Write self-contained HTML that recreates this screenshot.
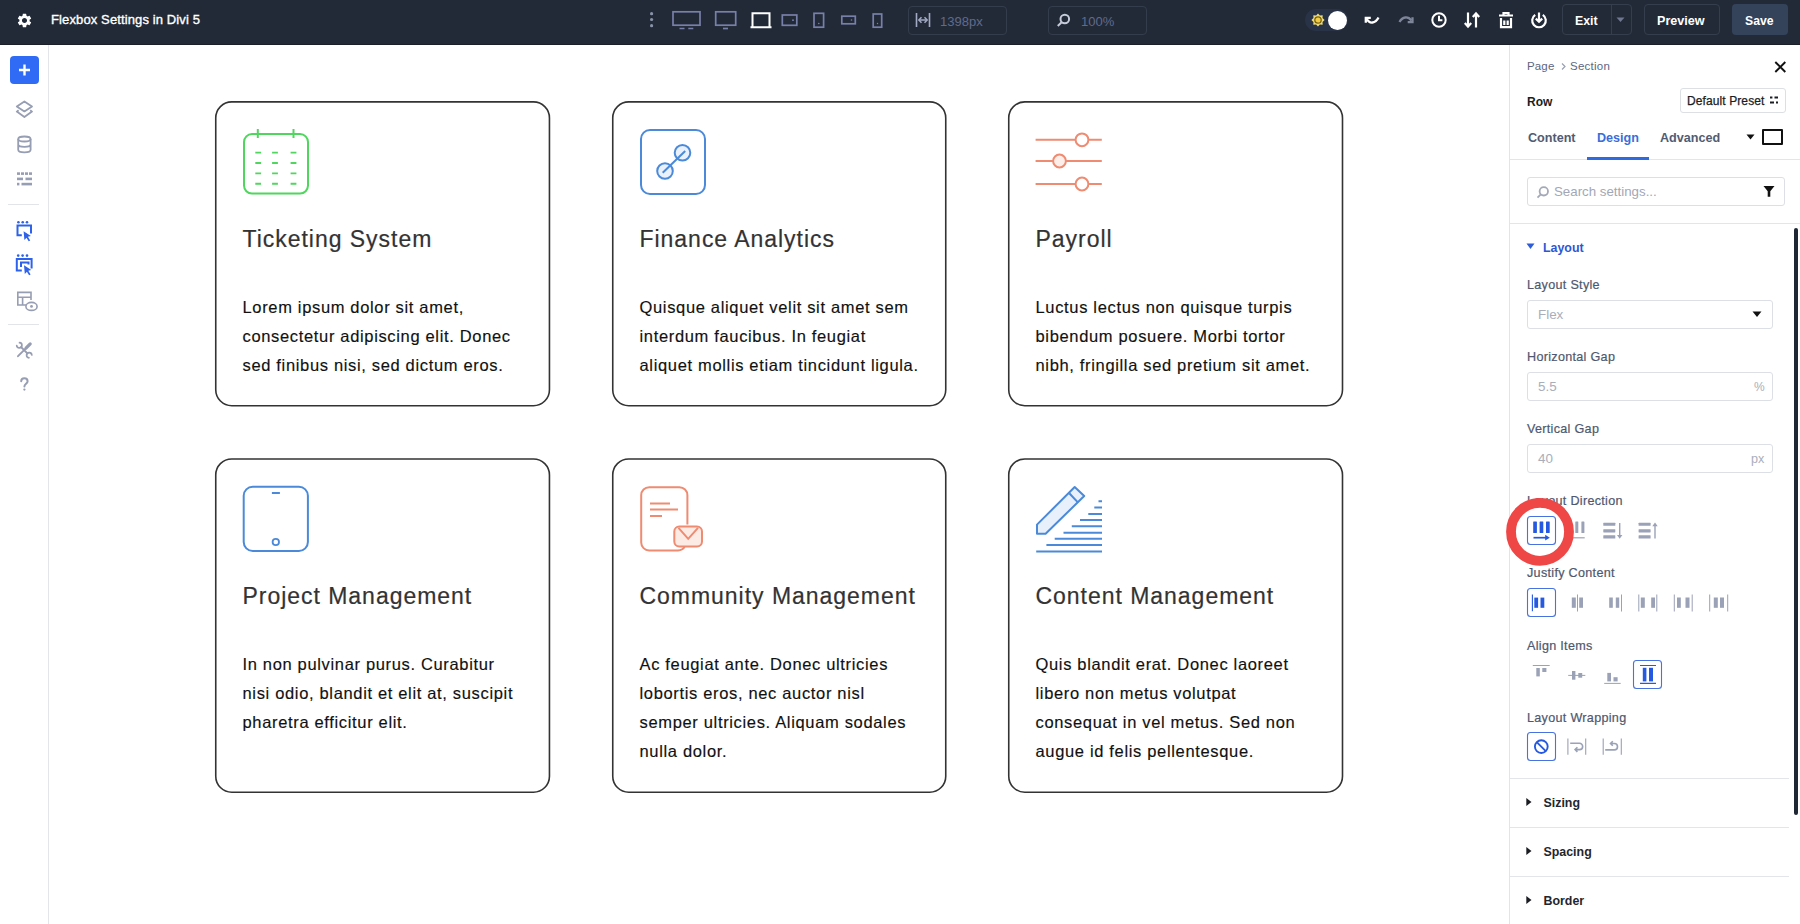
<!DOCTYPE html>
<html><head><meta charset="utf-8">
<style>
*{box-sizing:border-box;margin:0;padding:0}
html,body{width:1800px;height:924px;overflow:hidden;background:#fff;font-family:"Liberation Sans",sans-serif}
.a{position:absolute}
#top{left:0;top:0;width:1800px;height:45px;background:#222a38;border-bottom:1px solid #1b1f28}
#side{left:0;top:45px;width:49px;height:879px;background:#fff;border-right:1px solid #e3e5ea}
#panel{left:1509px;top:45px;width:291px;height:879px;background:#fff;border-left:1px solid #e2e4e9}
.card{position:absolute;width:335px;border:1.5px solid transparent;border-radius:15px}
.card .ic{position:absolute;left:26.5px;top:26.5px;width:68px;height:68px}
.card h3{position:absolute;left:26.5px;top:122px;font-weight:400;font-size:23px;line-height:30px;letter-spacing:0.97px;color:#333;white-space:nowrap;-webkit-text-stroke:0.2px #333}
.card p{position:absolute;left:26.5px;top:191px;font-size:16.5px;line-height:29px;letter-spacing:0.66px;color:#111;white-space:nowrap;-webkit-text-stroke:0.15px #111}
.t{position:absolute;white-space:nowrap;line-height:1}
.lbl{font-size:12.6px;color:#4f586e;letter-spacing:0.3px;-webkit-text-stroke:0.2px #4f586e}
.inp{left:1527px;width:246px;height:29px;border:1px solid #dcdfe5;border-radius:3px}
</style></head><body>
<div id="top" class="a">
  <svg class="a" style="left:16px;top:12px" width="17" height="17" viewBox="0 0 24 24"><path fill="#fff" d="M19.14 12.94c.04-.3.06-.61.06-.94 0-.32-.02-.64-.07-.94l2.03-1.58a.49.49 0 0 0 .12-.61l-1.92-3.32a.488.488 0 0 0-.59-.22l-2.39.96c-.5-.38-1.03-.7-1.62-.94l-.36-2.54a.484.484 0 0 0-.48-.41h-3.84c-.24 0-.43.17-.47.41l-.36 2.54c-.59.24-1.13.57-1.62.94l-2.39-.96c-.22-.08-.47 0-.59.22L2.74 8.87c-.12.21-.08.47.12.61l2.03 1.58c-.05.3-.09.63-.09.94s.02.64.07.94l-2.03 1.58a.49.49 0 0 0-.12.61l1.92 3.32c.12.22.37.29.59.22l2.39-.96c.5.38 1.03.7 1.62.94l.36 2.54c.05.24.24.41.48.41h3.84c.24 0 .44-.17.47-.41l.36-2.54c.59-.24 1.13-.56 1.62-.94l2.39.96c.22.08.47 0 .59-.22l1.92-3.32c.12-.22.07-.47-.12-.61l-2.01-1.58zM12 15.6c-1.98 0-3.6-1.62-3.6-3.6s1.62-3.6 3.6-3.6 3.6 1.62 3.6 3.6-1.62 3.6-3.6 3.6z"/></svg>
  <div class="t" style="left:51px;top:13px;font-size:13px;color:#fff;letter-spacing:0.12px;-webkit-text-stroke:0.35px #fff">Flexbox Settings in Divi 5</div>
  <svg class="a" style="left:648px;top:10px" width="8" height="20" viewBox="0 0 8 20"><circle cx="3.6" cy="3.7" r="1.6" fill="#8a92a8"/><circle cx="3.6" cy="9.5" r="1.6" fill="#8a92a8"/><circle cx="3.6" cy="15.7" r="1.6" fill="#8a92a8"/></svg>
  <svg class="a" style="left:660px;top:0" width="240" height="44" viewBox="660 0 240 44" fill="none" stroke="#7780a8" stroke-width="1.7">
    <rect x="673" y="11.8" width="27" height="13.4"/>
    <path d="M679.5 28.5h5M688.3 28.5h5" />
    <rect x="715.7" y="11.8" width="20" height="13.4"/>
    <path d="M723 28.5h5"/>
    <path d="M752.5 26.5V13.3h17v13.2M750.5 27.3h21" stroke="#fff" stroke-width="2"/>
    <rect x="782.3" y="15" width="14.5" height="10.3"/>
    <circle cx="793" cy="20.2" r="0.9" fill="#7882ad" stroke="none"/>
    <rect x="814" y="13.3" width="9.6" height="13.9"/>
    <circle cx="818.8" cy="23.5" r="0.8" fill="#7882ad" stroke="none"/>
    <rect x="841.8" y="16.2" width="13.5" height="7.6"/>
    <circle cx="851.5" cy="20" r="0.8" fill="#7882ad" stroke="none"/>
    <rect x="873.2" y="14" width="8.5" height="13.2"/>
    <circle cx="877.5" cy="23.5" r="0.7" fill="#7882ad" stroke="none"/>
  </svg>
  <div class="a" style="left:908px;top:6px;width:99px;height:29px;border:1px solid #343d4c;border-radius:4px"></div>
  <svg class="a" style="left:914px;top:12px" width="18" height="16" viewBox="0 0 18 16" fill="none" stroke="#a3aac4" stroke-width="1.6"><path d="M2.5 1v14M15.5 1v14M5 8h8"/><path d="M7.5 5.2L4.8 8l2.7 2.8M10.5 5.2L13.2 8l-2.7 2.8" stroke-width="1.5"/></svg>
  <div class="t" style="left:940px;top:14.5px;font-size:13px;color:#606a8c">1398px</div>
  <div class="a" style="left:1048px;top:6px;width:99px;height:29px;border:1px solid #343d4c;border-radius:4px"></div>
  <svg class="a" style="left:1056px;top:13px" width="15" height="14" viewBox="0 0 15 14" fill="none" stroke="#c6cbda" stroke-width="2"><circle cx="8.8" cy="6" r="4.3"/><path d="M5.6 9.2L1.8 13"/></svg>
  <div class="t" style="left:1081px;top:14.5px;font-size:13px;color:#606a8c">100%</div>

  <div class="a" style="left:1305px;top:9px;width:43px;height:22px;border-radius:11px;background:#283347"></div>
  <svg class="a" style="left:1311px;top:13px" width="14" height="14" viewBox="0 0 14 14"><polygon points="7.00,0.40 8.88,2.47 11.67,2.33 11.53,5.12 13.60,7.00 11.53,8.88 11.67,11.67 8.88,11.53 7.00,13.60 5.12,11.53 2.33,11.67 2.47,8.88 0.40,7.00 2.47,5.12 2.33,2.33 5.12,2.47" fill="#eedc7c"/><circle cx="7" cy="7" r="3.2" fill="#f3cc45" stroke="#7a6410" stroke-width="1.3"/></svg>
  <div class="a" style="left:1328px;top:11px;width:19px;height:19px;border-radius:50%;background:#fff"></div>
  <svg class="a" style="left:1360px;top:10px" width="24" height="20" viewBox="1360 10 24 20" fill="none" stroke="#fff" stroke-width="2.3"><path d="M1366.5 18.5C1369.5 24.5 1375.5 23.5 1378.5 17.5"/><path d="M1365.8 22.8V17.8h5"/></svg>
  <svg class="a" style="left:1394px;top:10px" width="24" height="20" viewBox="1394 10 24 20" fill="none" stroke="#7d8598" stroke-width="2.3"><path d="M1399.5 22C1402.5 16.5 1408 16 1411.5 20.5"/><path d="M1412.5 17.3v4.8h-4.8"/></svg>
  <svg class="a" style="left:1430px;top:11px" width="18" height="18" viewBox="0 0 18 18" fill="none" stroke="#fff" stroke-width="2"><circle cx="9" cy="9" r="6.7"/><path d="M9 4.8v4.5h3.4"/></svg>
  <svg class="a" style="left:1463px;top:11px" width="18" height="18" viewBox="0 0 18 18" fill="none" stroke="#fff" stroke-width="2.2"><path d="M5 1.5v14M1.8 12l3.2 3.5 3.2-3.5M13 16.5v-14M9.8 6l3.2-3.5L16.2 6"/></svg>
  <svg class="a" style="left:1498px;top:11px" width="16" height="18" viewBox="0 0 16 18" fill="none" stroke="#fff" stroke-width="2.2"><path d="M1 4.5h14M5.5 4.5V2h5v2.5M3 7v9.2h10V7M6.3 9.5v4.5M9.7 9.5v4.5"/></svg>
  <svg class="a" style="left:1530px;top:11px" width="18" height="18" viewBox="0 0 18 18" fill="none" stroke="#fff" stroke-width="2.2"><path d="M5.2 3.8A6.8 6.8 0 1 0 12.8 3.8"/><path d="M9 1.5v9M5.8 7.6L9 10.8l3.2-3.2"/></svg>
  <div class="a" style="left:1562px;top:4px;width:70px;height:31px;border:1px solid #353e4d;border-radius:4px"></div>
  <div class="a" style="left:1611px;top:5px;width:1px;height:29px;background:#353e4d"></div>
  <svg class="a" style="left:1616px;top:17px" width="9" height="6" viewBox="0 0 9 6"><path d="M0.5 0.5h8L4.5 5z" fill="#6f7890"/></svg>
  <div class="t" style="left:1575px;top:15px;font-size:12.3px;font-weight:700;color:#fff">Exit</div>
  <div class="a" style="left:1644px;top:4px;width:76px;height:31px;border:1px solid #353e4d;border-radius:4px"></div>
  <div class="t" style="left:1657px;top:15px;font-size:12.6px;font-weight:700;color:#fff">Preview</div>
  <div class="a" style="left:1732px;top:4px;width:56px;height:31px;border-radius:4px;background:#34435a"></div>
  <div class="t" style="left:1745px;top:15px;font-size:12.2px;font-weight:700;color:#fff">Save</div>
</div>
<div id="side" class="a"></div>
<div class="a" style="left:10px;top:56px;width:29px;height:28px;border-radius:4px;background:#2f6bf5"></div>
<svg class="a" style="left:0;top:44px" width="48" height="360" viewBox="0 44 48 360" fill="none">
  <path d="M24.5 64.5v11M19 70h11" stroke="#fff" stroke-width="2.4"/>
  <g stroke="#979db2" stroke-width="1.8" stroke-linejoin="round">
    <path d="M24.4 101.4l7.6 5-7.6 5-7.6-5z"/>
    <path d="M18.6 110.2l-1.8 1.4 7.6 5.4 7.6-5.4-1.8-1.4"/>
    <ellipse cx="24.4" cy="139" rx="6.2" ry="2.5"/>
    <path d="M18.2 139v10.8c0 1.5 2.8 2.6 6.2 2.6s6.2-1.1 6.2-2.6V139M18.2 144.3c0 1.5 2.8 2.6 6.2 2.6s6.2-1.1 6.2-2.6"/>
  </g>
  <g fill="#979db2">
    <rect x="17" y="172.3" width="3" height="2.6"/><rect x="21" y="172.3" width="3" height="2.6"/><rect x="25" y="172.3" width="3" height="2.6"/><rect x="29" y="172.3" width="3" height="2.6"/>
    <rect x="17" y="177.6" width="6" height="2.6"/><rect x="25.5" y="177.6" width="6.5" height="2.6"/>
    <rect x="17" y="182.8" width="2.4" height="2.6"/><rect x="21.5" y="182.8" width="10.5" height="2.6"/>
  </g>
  <path d="M8 204.5h31M8 324.5h31" stroke="#e2e4e9" stroke-width="1"/>
  <g fill="#2e62ea">
    <circle cx="18.4" cy="222.2" r="1.3"/><circle cx="22.7" cy="222.2" r="1.3"/><circle cx="27" cy="222.2" r="1.3"/>
    <circle cx="18.2" cy="255.6" r="1.3"/><circle cx="22.6" cy="255.6" r="1.3"/><circle cx="27" cy="255.6" r="1.3"/>
    <path d="M23.6 231.3l7.3 4.6-3 .9 2.3 3.6-1.5.9-2.2-3.6-2.1 2.2z"/>
    <path d="M24 265.3l7.3 4.6-3 .9 2.3 3.6-1.5.9-2.2-3.6-2.1 2.2z"/>
  </g>
  <g stroke="#2e62ea" stroke-width="2">
    <path d="M21.8 235.2h-4.3v-9.7h13.5v8"/>
    <path d="M21.8 270.6h-5v-11.6h14.8v9.6M21 267V262.5h7.5v2"/>
  </g>
  <g stroke="#979db2" stroke-width="1.6">
    <path d="M26 305H17.8V292.4h13.2v7.5M17.8 297.2h13.2M22.6 297.2V305"/>
    <ellipse cx="31.5" cy="306.4" rx="5.6" ry="4" fill="#fff"/>
  </g>
  <circle cx="31.5" cy="306.4" r="1.4" fill="#979db2"/>
  <g stroke="#979db2" stroke-linecap="round" fill="none">
    <path d="M25.3 348.8L18 356.2" stroke-width="1.9"/>
    <path d="M26 348.1l4.2-4.2" stroke-width="3.2"/>
    <path d="M21.1 347.1l6.3 6.3" stroke-width="2"/>
    <path d="M19.53 342.71A2.6 2.6 0 1 1 16.71 345.53" stroke-width="1.7"/>
    <path d="M28.97 357.79A2.6 2.6 0 1 1 31.79 354.97" stroke-width="1.7"/>
    <path d="M21.2 381.3c0-2 1.5-3 3.2-3s3.2 1.1 3.2 2.9c0 2.6-3.2 2.5-3.2 5.3" stroke-width="2"/>
  </g>
  <circle cx="24.4" cy="389.6" r="1.15" fill="#979db2"/>
</svg>
<div id="panel" class="a"></div>
<div class="t" style="left:1527px;top:61px;font-size:11.5px;color:#5d6680;letter-spacing:0.15px">Page</div>
<svg class="a" style="left:1560px;top:62px" width="7" height="9" viewBox="0 0 7 9"><path d="M2 1.5l3 3-3 3" fill="none" stroke="#9aa0b2" stroke-width="1.2"/></svg>
<div class="t" style="left:1570px;top:61px;font-size:11.5px;color:#5d6680;letter-spacing:0.25px">Section</div>
<svg class="a" style="left:1773px;top:60px" width="14" height="14" viewBox="0 0 14 14"><path d="M2.3 2l10 10M12.3 2l-10 10" stroke="#111" stroke-width="1.9"/></svg>
<div class="t" style="left:1527px;top:96px;font-size:12px;font-weight:700;color:#1b1d22">Row</div>
<div class="a" style="left:1680px;top:88px;width:106px;height:25px;border:1px solid #dcdfe4;border-radius:3px"></div>
<div class="t" style="left:1687px;top:94.5px;font-size:12px;color:#1b1d22;letter-spacing:0.1px;-webkit-text-stroke:0.25px #1b1d22">Default Preset</div>
<svg class="a" style="left:1769px;top:95px" width="10" height="10" viewBox="0 0 10 10" fill="#1b1d22"><rect x="1" y="1.5" width="2.4" height="2"/><rect x="5.5" y="1.5" width="3.5" height="2"/><rect x="1" y="6.5" width="4" height="2"/><rect x="7" y="6.5" width="2" height="2"/></svg>
<div class="t" style="left:1528px;top:132px;font-size:12.6px;font-weight:700;color:#535b72">Content</div>
<div class="t" style="left:1597px;top:132px;font-size:12.6px;font-weight:700;color:#3a6ed8">Design</div>
<div class="t" style="left:1660px;top:132px;font-size:12.6px;font-weight:700;color:#535b72">Advanced</div>
<svg class="a" style="left:1745px;top:133px" width="11" height="8" viewBox="0 0 11 8"><path d="M1.5 1.5h8l-4 5z" fill="#111"/></svg>
<div class="a" style="left:1762px;top:129px;width:20.5px;height:16px;border:2px solid #111;border-radius:1px"></div>
<div class="a" style="left:1510px;top:159px;width:290px;height:1px;background:#e3e5ea"></div>
<div class="a" style="left:1587px;top:157px;width:62px;height:3px;background:#2f6ae0"></div>
<div class="a" style="left:1527px;top:177px;width:258px;height:29px;border:1px solid #dcdfe5;border-radius:3px"></div>
<svg class="a" style="left:1535px;top:184px" width="16" height="16" viewBox="0 0 16 16" fill="none" stroke="#a4a9b7" stroke-width="1.8"><circle cx="8.8" cy="7.3" r="4.2"/><path d="M5.8 10.3l-3.3 3.3"/></svg>
<div class="t" style="left:1554px;top:184.5px;font-size:13.3px;color:#a2a7b6">Search settings...</div>
<svg class="a" style="left:1762px;top:185px" width="14" height="13" viewBox="0 0 14 13"><path d="M1.5 1h11L8.3 6.2v5.6H5.7V6.2z" fill="#111"/></svg>
<div class="a" style="left:1510px;top:223px;width:290px;height:1px;background:#e3e5ea"></div>
<div class="a" style="left:1794px;top:228px;width:4px;height:587px;border-radius:2px;background:#1e2733"></div>
<svg class="a" style="left:1525px;top:242px" width="11" height="9" viewBox="0 0 11 9"><path d="M1.5 1.5h8l-4 5.5z" fill="#2d5ddb"/></svg>
<div class="t" style="left:1543px;top:242px;font-size:12.4px;font-weight:700;color:#2d58d4">Layout</div>
<div class="t lbl" style="left:1527px;top:279px">Layout Style</div>
<div class="t lbl" style="left:1527px;top:351px">Horizontal Gap</div>
<div class="t lbl" style="left:1527px;top:423px">Vertical Gap</div>
<div class="t lbl" style="left:1527px;top:495px">Layout Direction</div>
<div class="t lbl" style="left:1527px;top:567px">Justify Content</div>
<div class="t lbl" style="left:1527px;top:640px">Align Items</div>
<div class="t lbl" style="left:1527px;top:712px">Layout Wrapping</div>
<div class="a inp" style="top:300px"></div>
<div class="t" style="left:1538px;top:307.5px;font-size:13.4px;color:#a9aebb">Flex</div>
<svg class="a" style="left:1751px;top:310px" width="12" height="9" viewBox="0 0 12 9"><path d="M1.5 1.5h9l-4.5 5.5z" fill="#111"/></svg>
<div class="a inp" style="top:372px"></div>
<div class="t" style="left:1538px;top:379.5px;font-size:13.4px;color:#a9aebb">5.5</div>
<div class="t" style="left:1754px;top:381px;font-size:12px;color:#a9aebb">%</div>
<div class="a inp" style="top:444px"></div>
<div class="t" style="left:1538px;top:451.5px;font-size:13.4px;color:#a9aebb">40</div>
<div class="t" style="left:1751px;top:453px;font-size:12.6px;color:#a9aebb">px</div>


<!-- cards -->
<svg class="a" style="left:200px;top:90px" width="1160" height="720" viewBox="200 90 1160 720" fill="none" stroke="#333" stroke-width="1.6">
  <rect x="215.75" y="101.9" width="333.7" height="303.8" rx="16"/>
  <rect x="612.75" y="101.9" width="333" height="303.8" rx="16"/>
  <rect x="1008.75" y="101.9" width="333.75" height="303.8" rx="16"/>
  <rect x="215.75" y="459" width="333.7" height="333.2" rx="16"/>
  <rect x="612.75" y="459" width="333" height="333.2" rx="16"/>
  <rect x="1008.75" y="459" width="333.75" height="333.2" rx="16"/>
</svg>

<div class="card" style="left:215px;top:101px;height:305px">
  <h3>Ticketing System</h3>
  <p>Lorem ipsum dolor sit amet,<br>consectetur adipiscing elit. Donec<br>sed finibus nisi, sed dictum eros.</p>
</div>
<div class="card" style="left:612px;top:101px;height:305px">
  <h3>Finance Analytics</h3>
  <p>Quisque aliquet velit sit amet sem<br>interdum faucibus. In feugiat<br>aliquet mollis etiam tincidunt ligula.</p>
</div>
<div class="card" style="left:1008px;top:101px;height:305px">
  <h3>Payroll</h3>
  <p>Luctus lectus non quisque turpis<br>bibendum posuere. Morbi tortor<br>nibh, fringilla sed pretium sit amet.</p>
</div>
<div class="card" style="left:215px;top:458px;height:335px">
  <h3>Project Management</h3>
  <p>In non pulvinar purus. Curabitur<br>nisi odio, blandit et elit at, suscipit<br>pharetra efficitur elit.</p>
</div>
<div class="card" style="left:612px;top:458px;height:335px">
  <h3>Community Management</h3>
  <p>Ac feugiat ante. Donec ultricies<br>lobortis eros, nec auctor nisl<br>semper ultricies. Aliquam sodales<br>nulla dolor.</p>
</div>
<div class="card" style="left:1008px;top:458px;height:335px">
  <h3>Content Management</h3>
  <p>Quis blandit erat. Donec laoreet<br>libero non metus volutpat<br>consequat in vel metus. Sed non<br>augue id felis pellentesque.</p>
</div>

<svg class="a" style="left:230px;top:120px" width="90" height="85" viewBox="230 120 90 85" fill="none">
  <rect x="244" y="134" width="64" height="59.6" rx="8" stroke="#4fd65e" stroke-width="2"/>
  <path d="M257.8 129v9M293.5 129v9" stroke="#4fd65e" stroke-width="2"/>
  <g stroke="#4fd65e" stroke-width="1.9"><path d="M255.3 152.6h5.8M272.1 152.6h5.8M290.6 152.6h5.8M255.3 163h5.8M272.1 163h5.8M290.6 163h5.8M255.3 173.4h5.8M272.1 173.4h5.8M290.6 173.4h5.8M255.3 183.8h5.8M272.1 183.8h5.8M290.6 183.8h5.8"/></g>
</svg>
<svg class="a" style="left:630px;top:120px" width="90" height="85" viewBox="630 120 90 85" fill="none" stroke="#4a8ad9" stroke-width="2">
  <rect x="641" y="130" width="64" height="64" rx="9"/>
  <circle cx="665" cy="171" r="7.8" fill="#eaf1fb"/>
  <circle cx="682.5" cy="152.7" r="7.8" fill="#eaf1fb"/>
  <path d="M662.7 172.8L685.2 151"/>
</svg>
<svg class="a" style="left:1025px;top:120px" width="90" height="85" viewBox="1025 120 90 85" fill="none" stroke="#ee8b71" stroke-width="2">
  <path d="M1035.6 139.8h39.8M1088.6 139.8h13.2M1035.6 161h17.3M1066.1 161h35.7M1035.6 184h39.8M1088.6 184h13.2"/>
  <circle cx="1082" cy="139.8" r="6.4" fill="#fff"/>
  <circle cx="1059.5" cy="161" r="6.4" fill="#fdeee9"/>
  <circle cx="1082" cy="184" r="6.4" fill="#fff"/>
</svg>
<svg class="a" style="left:230px;top:475px" width="90" height="90" viewBox="230 475 90 90" fill="none" stroke="#4a8ad9" stroke-width="2">
  <rect x="243.7" y="486.7" width="64.2" height="64.3" rx="9"/>
  <path d="M271.9 493h8"/>
  <circle cx="275.8" cy="542" r="3.2" stroke-width="1.8"/>
</svg>
<svg class="a" style="left:630px;top:475px" width="90" height="90" viewBox="630 475 90 90" fill="none" stroke="#ee8b71" stroke-width="2">
  <path d="M687.4 524.6V495.2a8 8 0 0 0-8-8h-30.2a8 8 0 0 0-8 8v47.3a8 8 0 0 0 8 8h28.7a8 8 0 0 0 7.2-4.6"/>
  <path d="M650 503.4h20M650 509.6h28M650 515.9h12"/>
  <rect x="674.3" y="526.6" width="27.7" height="20" rx="5" fill="#fcebe5"/>
  <path d="M678.5 527.8l9.7 11 9.8-11"/>
</svg>
<svg class="a" style="left:1025px;top:475px" width="90" height="90" viewBox="1025 475 90 90" fill="none" stroke="#4a8ad9" stroke-width="2">
  <path d="M1037 533.8h8.6l38.6-37.8-9.5-9-37.7 37.6z" fill="#e8f0fb" stroke-linejoin="round"/>
  <path d="M1069.3 493.2l8.8 9.4"/>
  <path d="M1098.5 501.3h3.5M1094.3 507.6h7.7M1088.3 514h13.7M1080 520h22M1071.8 526.3h30.2M1063.5 532.7h38.5M1054.7 538.8h47.3M1046.4 545h55.6M1036.2 551.5h65.8"/>
</svg>
<svg class="a" style="left:1500px;top:480px" width="300" height="300" viewBox="1500 480 300 300" fill="none">
  <!-- layout direction -->
  <rect x="1527.5" y="516.5" width="28" height="28" rx="3" fill="#fff" stroke="#4a72df" stroke-width="1.1"/>
  <g fill="#2559e0"><rect x="1533.2" y="521.5" width="3.7" height="11.5" rx=".5"/><rect x="1539.6" y="521.5" width="3.7" height="11.5" rx=".5"/><rect x="1546" y="521.5" width="3.7" height="11.5" rx=".5"/></g>
  <path d="M1533.5 537.7h12.5" stroke="#2559e0" stroke-width="1.7"/><path d="M1545.2 534.8l4.6 2.9-4.6 2.9z" fill="#2559e0"/>
  <g fill="#9ba1b6"><rect x="1575.3" y="521.4" width="3" height="11.6" rx=".5"/><rect x="1581.4" y="521.4" width="3" height="11.6" rx=".5"/>
  <rect x="1603.3" y="522.8" width="12" height="3" rx=".4"/><rect x="1603.3" y="529.2" width="12" height="3.3" rx=".4"/><rect x="1603.3" y="535.3" width="12" height="3.3" rx=".4"/>
  <rect x="1638.6" y="522.8" width="12" height="3" rx=".4"/><rect x="1638.6" y="529.2" width="12" height="3.3" rx=".4"/><rect x="1638.6" y="535.3" width="12" height="3.3" rx=".4"/></g>
  <g stroke="#9ba1b6" stroke-width="1.2"><path d="M1570 537.8h14.7"/><path d="M1619.7 523v12.5" stroke-width="1.4"/><path d="M1617 535l2.7 3.8 2.7-3.8z" fill="#9ba1b6" stroke="none"/><path d="M1655 538.6v-12.5" stroke-width="1.4"/><path d="M1652.3 526.2l2.7-3.8 2.7 3.8z" fill="#9ba1b6" stroke="none"/></g>
  <!-- justify content -->
  <rect x="1527.5" y="588.5" width="28" height="28" rx="3" fill="#fff" stroke="#4a72df" stroke-width="1.1"/>
  <path d="M1532.4 594.6v16.6" stroke="#2559e0" stroke-width="1.1"/>
  <g fill="#2559e0"><rect x="1534.3" y="597.6" width="3.8" height="10.2"/><rect x="1540.5" y="597.6" width="3.8" height="10.2"/></g>
  <g fill="#9ba1b6">
    <rect x="1571.8" y="597.5" width="4" height="10.3"/><rect x="1579.2" y="597.5" width="3.8" height="10.3"/>
    <rect x="1609.2" y="597.5" width="3.6" height="10.3"/><rect x="1615.8" y="597.5" width="3.4" height="10.3"/>
    <rect x="1640.8" y="597.5" width="4" height="10.3"/><rect x="1651.2" y="597.5" width="3.8" height="10.3"/>
    <rect x="1677" y="597.5" width="3.8" height="10.3"/><rect x="1685.5" y="597.5" width="4" height="10.3"/>
    <rect x="1713.8" y="597.5" width="4" height="10.3"/><rect x="1720" y="597.5" width="4" height="10.3"/>
  </g>
  <g stroke="#9ba1b6" stroke-width="1"><path d="M1577.5 594.5v17M1621.5 594.5v17M1638.8 594.5v17M1656.8 594.5v17M1674.3 594.5v17M1692.2 594.5v17M1709.7 594.5v17M1727.7 594.5v17"/></g>
  <!-- align items -->
  <g fill="#9ba1b6">
    <rect x="1536.3" y="668" width="3.5" height="8.4"/><rect x="1542.3" y="668" width="4.1" height="4"/>
    <rect x="1572" y="671" width="3.4" height="8.7"/><rect x="1578.3" y="673" width="3.9" height="4.7"/>
    <rect x="1607.3" y="672.9" width="3.7" height="8.5"/><rect x="1613.5" y="677.2" width="4.1" height="4.2"/>
  </g>
  <g stroke="#9ba1b6" stroke-width="1"><path d="M1532.8 665.5h16.9M1568.2 675.4h17.1M1604.2 683.4h16.5"/></g>
  <rect x="1633.5" y="660.5" width="28" height="28" rx="3" fill="#fff" stroke="#4a72df" stroke-width="1.1"/>
  <path d="M1640 665.5h16M1640 683.4h16" stroke="#2559e0" stroke-width="1.2"/>
  <g fill="#2559e0"><rect x="1642.8" y="667.8" width="3.6" height="13.6"/><rect x="1649" y="667.8" width="4" height="13.6"/></g>
  <!-- wrapping -->
  <rect x="1527.5" y="732.5" width="28" height="28" rx="3" fill="#fff" stroke="#4a72df" stroke-width="1.1"/>
  <circle cx="1541.3" cy="746.6" r="6.4" stroke="#2559e0" stroke-width="1.9"/>
  <path d="M1536.8 742.1l9 9" stroke="#2559e0" stroke-width="1.9"/>
  <g stroke="#9ba1b6" stroke-width="1.1"><path d="M1567.9 738.5v16.3M1585.7 738.5v16.3M1603.2 738.5v16.3M1621.3 738.5v16.3"/></g>
  <g stroke="#9ba1b6" stroke-width="1.6"><path d="M1570.2 743.3h9.3a3.15 3.15 0 0 1 0 6.3h-4.2M1577.4 747.3l-2.3 2.3 2.3 2.3"/>
  <path d="M1605.2 749.9h9.1a3.2 3.2 0 0 0 0-6.4h-3.7M1612.8 741.2l-2.3 2.3 2.3 2.3"/></g>
  <!-- red ring -->
  <circle cx="1540" cy="531.8" r="29" stroke="#ef4646" stroke-width="9.8"/>
</svg>
<div class="a" style="left:1510px;top:778px;width:279px;height:1px;background:#e3e5ea"></div>
<div class="a" style="left:1510px;top:827px;width:279px;height:1px;background:#e3e5ea"></div>
<div class="a" style="left:1510px;top:876px;width:279px;height:1px;background:#e3e5ea"></div>
<svg class="a" style="left:1524px;top:796px" width="10" height="110" viewBox="0 0 10 110" fill="#1b1d22"><path d="M2.3 2v8l5.2-4z"/><path d="M2.3 51v8l5.2-4z"/><path d="M2.3 100v8l5.2-4z"/></svg>
<div class="t" style="left:1543.5px;top:797px;font-size:12.4px;font-weight:700;color:#23262d">Sizing</div>
<div class="t" style="left:1543.5px;top:846px;font-size:12.4px;font-weight:700;color:#23262d">Spacing</div>
<div class="t" style="left:1543.5px;top:895px;font-size:12.4px;font-weight:700;color:#23262d">Border</div>
</body></html>
